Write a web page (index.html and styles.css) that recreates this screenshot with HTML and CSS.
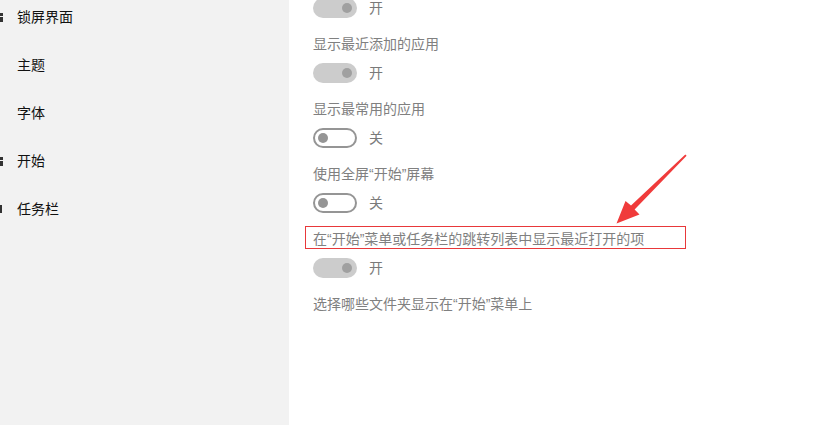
FILE: index.html
```html
<!DOCTYPE html>
<html lang="zh-CN">
<head>
<meta charset="utf-8">
<link rel="stylesheet" href="styles.css">
</head>
<body>
<div class="app">
  <nav class="sidebar">
    <ul class="nav">
      <li class="nav-item"><span class="ico ico-lock"></span><span>锁屏界面</span></li>
      <li class="nav-item"><span class="ico"></span><span>主题</span></li>
      <li class="nav-item"><span class="ico"></span><span>字体</span></li>
      <li class="nav-item"><span class="ico ico-start"></span><span>开始</span></li>
      <li class="nav-item"><span class="ico ico-bar"></span><span>任务栏</span></li>
    </ul>
  </nav>
  <main class="content">
    <div class="toggle-row first"><span class="toggle on"></span><span class="val">开</span></div>
    <div class="label">显示最近添加的应用</div>
    <div class="toggle-row"><span class="toggle on"></span><span class="val">开</span></div>
    <div class="label">显示最常用的应用</div>
    <div class="toggle-row"><span class="toggle off"></span><span class="val">关</span></div>
    <div class="label">使用全屏“开始”屏幕</div>
    <div class="toggle-row"><span class="toggle off"></span><span class="val">关</span></div>
    <div class="label">在“开始”菜单或任务栏的跳转列表中显示最近打开的项</div>
    <div class="toggle-row"><span class="toggle on"></span><span class="val">开</span></div>
    <div class="label">选择哪些文件夹显示在“开始”菜单上</div>
    <div class="highlight"></div>
    <svg class="arrow" width="832" height="425" viewBox="0 0 832 425">
      <polygon points="616.5,223.5 625.5,201 631,205.6 685.3,154.6 686.6,155.8 634.6,209.6 639.5,214.5" fill="#f03b3b"/>
    </svg>
  </main>
</div>
</body>
</html>
```
FILE: styles.css
```css
html, body {
  margin: 0;
  padding: 0;
  background: #ffffff;
}
body {
  font-family: "Liberation Sans", "Noto Sans CJK SC", sans-serif;
  font-size: 14px;
  width: 832px;
  height: 425px;
  overflow: hidden;
}
.app {
  display: flex;
  height: 425px;
}
.sidebar {
  width: 289px;
  flex: none;
  background: #f2f2f2;
  overflow: hidden;
}
.nav {
  list-style: none;
  margin: -7px 0 0 0;
  padding: 0;
}
.nav-item {
  height: 48px;
  display: flex;
  align-items: center;
  gap: 14px;
  color: #111;
  line-height: 20px;
}
.ico {
  width: 3px;
  height: 9px;
  flex: none;
}
.ico-lock {
  background: linear-gradient(#333 0 3px, transparent 3px 4px, #333 4px 9px);
}
.ico-start {
  background: linear-gradient(#333 0 3px, transparent 3px 4px, #333 4px 8px);
}
.ico-bar {
  background: #333;
  height: 8px;
  width: 2px;
  margin-right: 1px;
}
.content {
  flex: 1;
  position: relative;
  padding-left: 24px;
  display: flex;
  flex-direction: column;
  align-items: flex-start;
}
.toggle-row {
  display: flex;
  align-items: center;
  gap: 12px;
  height: 20px;
  margin-top: 9px;
}
.toggle-row.first {
  margin-top: -2px;
}
.label {
  height: 20px;
  line-height: 20px;
  margin-top: 16px;
  color: #808080;
}
.val {
  color: #7a7a7a;
  line-height: 20px;
}
.toggle {
  box-sizing: border-box;
  width: 44px;
  height: 20px;
  border-radius: 10px;
  position: relative;
  display: block;
}
.toggle::after {
  content: "";
  position: absolute;
  top: 50%;
  width: 10px;
  height: 10px;
  margin-top: -5px;
  border-radius: 50%;
}
.toggle.on {
  background: #cccccc;
}
.toggle.on::after {
  right: 5px;
  background: #a0a0a0;
}
.toggle.off {
  background: #fff;
  border: 2px solid #959595;
}
.toggle.off::after {
  left: 3px;
  background: #959595;
}
.highlight {
  position: absolute;
  left: 16px;
  top: 226px;
  width: 381px;
  height: 23px;
  box-sizing: border-box;
  border: 1px solid #e8383a;
}
.arrow {
  position: absolute;
  left: -289px;
  top: 0;
  pointer-events: none;
}
```
